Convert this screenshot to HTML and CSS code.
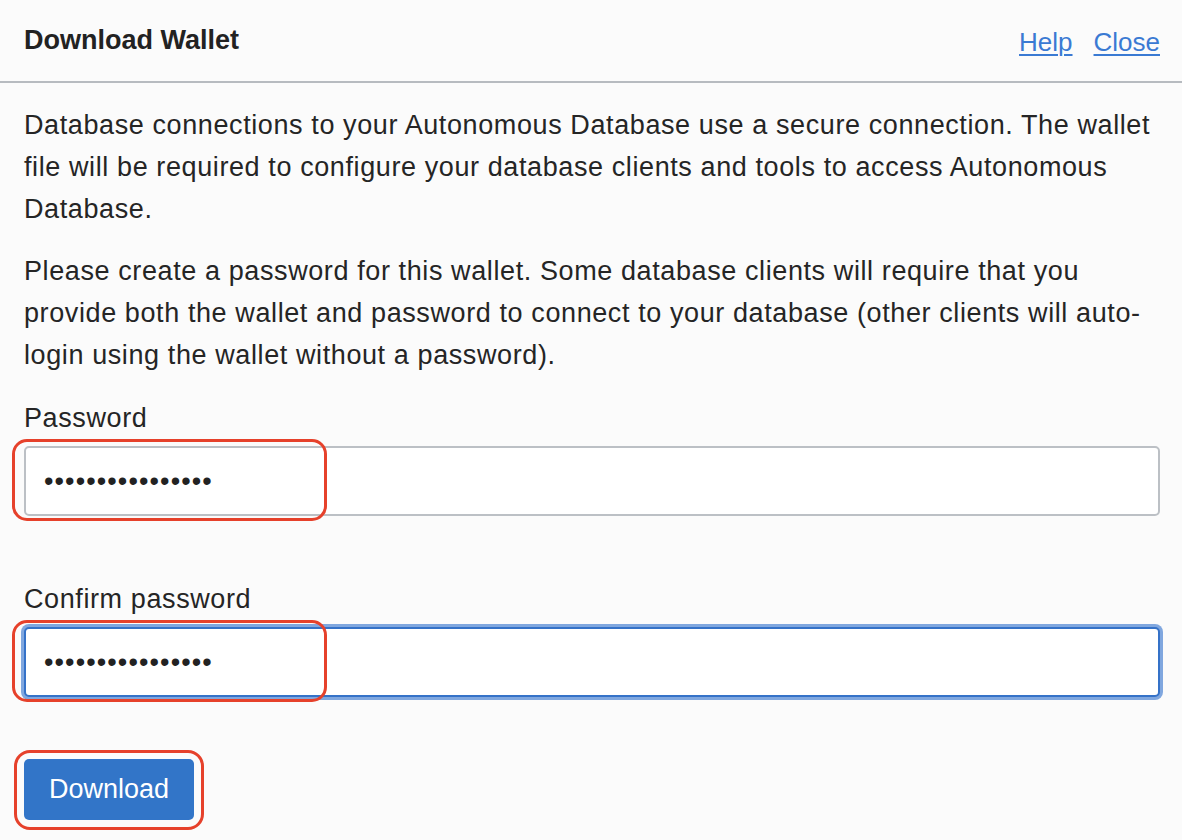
FILE: index.html
```html
<!DOCTYPE html>
<html lang="en">
<head>
<meta charset="utf-8">
<title>Download Wallet</title>
<link rel="stylesheet" href="styles.css">
</head>
<body>
<div class="dialog">
  <header class="dialog-header">
    <h1 class="dialog-title">Download Wallet</h1>
    <nav class="header-links">
      <a href="#" class="link">Help</a>
      <a href="#" class="link">Close</a>
    </nav>
  </header>
  <div class="dialog-body">
    <p class="para para-first">Database connections to your Autonomous Database use a secure connection. The wallet file will be required to configure your database clients and tools to access Autonomous Database.</p>
    <p class="para">Please create a password for this wallet. Some database clients will require that you provide both the wallet and password to connect to your database (other clients will auto-login using the wallet without a password).</p>
    <div class="form">
      <div class="field">
        <label class="label" for="pw1">Password</label>
        <div class="input-wrap">
          <input id="pw1" class="input" type="password" value="abcdefghijklmnop">
          <span class="highlight highlight-input"></span>
        </div>
      </div>
      <div class="field">
        <label class="label" for="pw2">Confirm password</label>
        <div class="input-wrap">
          <input id="pw2" class="input input-focus" type="password" value="abcdefghijklmnop">
          <span class="highlight highlight-input"></span>
        </div>
      </div>
      <div class="actions">
        <div class="btn-wrap">
          <button class="btn-primary" type="button">Download</button>
          <span class="highlight highlight-btn"></span>
        </div>
      </div>
    </div>
  </div>
</div>
</body>
</html>
```

FILE: styles.css
```css
html, body {
  margin: 0;
  padding: 0;
  background: #fbfbfb;
}

body {
  font-family: "Liberation Sans", Arial, Helvetica, sans-serif;
  color: #252525;
}

.dialog {
  width: 1182px;
  height: 840px;
  overflow: hidden;
}

.dialog-header {
  height: 81px;
  display: flex;
  align-items: center;
  justify-content: space-between;
  padding: 0 22px 0 24px;
  border-bottom: 2px solid #b7bbc0;
}

.dialog-title {
  margin: 0;
  font-size: 27px;
  font-weight: bold;
  color: #222;
}

.header-links {
  display: flex;
  gap: 21px;
  padding-top: 3px;
}

.link {
  font-size: 26px;
  color: #3a7ad3;
  text-decoration: underline;
  text-decoration-thickness: 1.5px;
  text-underline-offset: 3px;
}

.dialog-body {
  padding: 0 22px 0 24px;
}

.para {
  margin: 20px 0 0;
  font-size: 27px;
  line-height: 42px;
  letter-spacing: 0.6px;
}

.para-first {
  margin-top: 21px;
}

.form {
  display: flex;
  flex-direction: column;
  gap: 62px;
  margin-top: 21px;
}

.field {
  display: flex;
  flex-direction: column;
}

.label {
  font-size: 27px;
  line-height: 42px;
  letter-spacing: 0.6px;
  margin-bottom: 7px;
}

.input-wrap {
  position: relative;
}

.input {
  box-sizing: border-box;
  width: 100%;
  height: 70px;
  margin: 0;
  padding: 0 18px;
  border: 2px solid #bcc0c5;
  border-radius: 5px;
  background: #fff;
  font-family: "Liberation Sans", Arial, sans-serif;
  font-size: 27px;
  letter-spacing: 1.1px;
  color: #222;
  outline: none;
}

.input-focus {
  border-color: #3572c8;
  box-shadow: 0 0 0 3px #80a7df;
}

.highlight {
  position: absolute;
  box-sizing: border-box;
  border: 3.5px solid #e6412b;
  pointer-events: none;
}

.highlight-input {
  left: -12px;
  top: -7px;
  width: 315px;
  height: 82px;
  border-radius: 15px;
}

.actions {
  display: flex;
}

.btn-wrap {
  position: relative;
}

.btn-primary {
  display: block;
  width: 170px;
  height: 61px;
  margin: 0;
  padding: 0;
  border: none;
  border-radius: 5px;
  background: #3275c8;
  color: #fff;
  font-family: "Liberation Sans", Arial, sans-serif;
  font-size: 27px;
}

.highlight-btn {
  left: -10px;
  top: -9px;
  width: 190px;
  height: 80px;
  border-radius: 16px;
}
```
